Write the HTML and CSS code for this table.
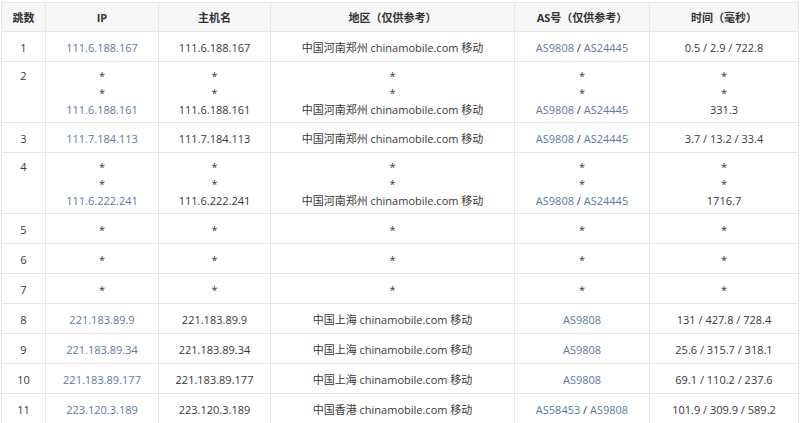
FILE: index.html
```html
<!DOCTYPE html>
<html lang="zh">
<head>
<meta charset="utf-8">
<link rel="stylesheet" href="styles.css">
</head>
<body>
<table class="trace">
  <colgroup>
    <col class="c1"><col class="c2"><col class="c3"><col class="c4"><col class="c5"><col class="c6">
  </colgroup>
  <thead>
    <tr><th>跳数</th><th>IP</th><th>主机名</th><th>地区（仅供参考）</th><th>AS号（仅供参考）</th><th>时间（毫秒）</th></tr>
  </thead>
  <tbody>
    <tr class="one"><td>1</td><td><a>111.6.188.167</a></td><td>111.6.188.167</td><td>中国河南郑州 chinamobile.com 移动</td><td><a>AS9808</a> / <a>AS24445</a></td><td>0.5 / 2.9 / 722.8</td></tr>
    <tr class="multi"><td>2</td><td><span class="st">*</span><span class="st">*</span><a>111.6.188.161</a></td><td><span class="st">*</span><span class="st">*</span>111.6.188.161</td><td><span class="st">*</span><span class="st">*</span>中国河南郑州 chinamobile.com 移动</td><td><span class="st">*</span><span class="st">*</span><a>AS9808</a> / <a>AS24445</a></td><td><span class="st">*</span><span class="st">*</span>331.3</td></tr>
    <tr class="one"><td>3</td><td><a>111.7.184.113</a></td><td>111.7.184.113</td><td>中国河南郑州 chinamobile.com 移动</td><td><a>AS9808</a> / <a>AS24445</a></td><td>3.7 / 13.2 / 33.4</td></tr>
    <tr class="multi"><td>4</td><td><span class="st">*</span><span class="st">*</span><a>111.6.222.241</a></td><td><span class="st">*</span><span class="st">*</span>111.6.222.241</td><td><span class="st">*</span><span class="st">*</span>中国河南郑州 chinamobile.com 移动</td><td><span class="st">*</span><span class="st">*</span><a>AS9808</a> / <a>AS24445</a></td><td><span class="st">*</span><span class="st">*</span>1716.7</td></tr>
    <tr class="one"><td>5</td><td>*</td><td>*</td><td>*</td><td>*</td><td>*</td></tr>
    <tr class="one"><td>6</td><td>*</td><td>*</td><td>*</td><td>*</td><td>*</td></tr>
    <tr class="one"><td>7</td><td>*</td><td>*</td><td>*</td><td>*</td><td>*</td></tr>
    <tr class="one"><td>8</td><td><a>221.183.89.9</a></td><td>221.183.89.9</td><td>中国上海 chinamobile.com 移动</td><td><a>AS9808</a></td><td>131 / 427.8 / 728.4</td></tr>
    <tr class="one"><td>9</td><td><a>221.183.89.34</a></td><td>221.183.89.34</td><td>中国上海 chinamobile.com 移动</td><td><a>AS9808</a></td><td>25.6 / 315.7 / 318.1</td></tr>
    <tr class="one"><td>10</td><td><a>221.183.89.177</a></td><td>221.183.89.177</td><td>中国上海 chinamobile.com 移动</td><td><a>AS9808</a></td><td>69.1 / 110.2 / 237.6</td></tr>
    <tr class="one"><td>11</td><td><a>223.120.3.189</a></td><td>223.120.3.189</td><td>中国香港 chinamobile.com 移动</td><td><a>AS58453</a> / <a>AS9808</a></td><td>101.9 / 309.9 / 589.2</td></tr>
  </tbody>
</table>
</body>
</html>
```
FILE: styles.css
```css
html, body {
  margin: 0;
  padding: 0;
  background: #ffffff;
}
body {
  font-family: "Open Sans", "Noto Sans CJK SC", sans-serif;
  font-size: 11px;
  color: #383838;
}
.trace {
  border-collapse: collapse;
  table-layout: fixed;
  width: 797px;
  margin: 2px 0 0 1px;
}
.c1 { width: 44px; }
.c2 { width: 113px; }
.c3 { width: 112px; }
.c4 { width: 244px; }
.c5 { width: 135px; }
.c6 { width: 149px; }
.trace th, .trace td {
  border: 1px solid #e6e6e6;
  text-align: center;
  padding: 0 4px;
  white-space: nowrap;
}
.trace th {
  background: #f6f6f6;
  font-weight: 700;
  height: 28px;
  line-height: 17px;
  color: #333333;
}
.trace td {
  line-height: 17px;
  vertical-align: top;
}
.one td {
  height: 30px;
  padding-top: 7px;
  padding-bottom: 0;
  box-sizing: border-box;
}
.multi td {
  padding-top: 5px;
  padding-bottom: 4px;
}
.st {
  display: block;
}
.trace a {
  color: #5a79a5;
  text-decoration: none;
}
```
